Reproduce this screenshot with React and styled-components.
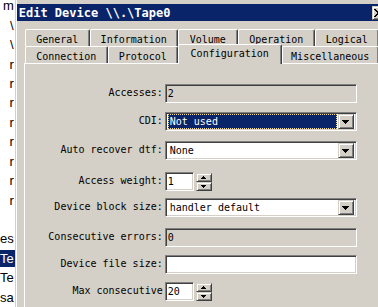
import React from 'react';
import styled, { createGlobalStyle } from 'styled-components';

// Page

const GlobalStyle = createGlobalStyle`
  html, body {
    margin: 0;
    padding: 0;
    background: #ffffff;
    overflow: hidden;
  }
`

const Screen = styled.div`
  display: flex;
  width: 378px;
  height: 307px;
  overflow: hidden;
  background: #ffffff;
`

// Window behind the dialog

const BackList = styled.div`
  flex: 0 0 11px;
  display: flex;
  flex-direction: column;
  margin-top: -4px;
  font-family: "Liberation Sans", Arial, sans-serif;
  font-size: 13px;
  color: #000000;
`

const BackItem = styled.div`
  height: ${p => (p.$selected ? 18 : 20)}px;
  margin: ${p => (p.$selected ? '1px 0' : '0')};
  display: flex;
  align-items: center;
  justify-content: flex-end;
  overflow: hidden;
  white-space: nowrap;
  padding-right: 1px;
  background: ${p => (p.$selected ? '#0a246a' : 'transparent')};
  color: ${p => (p.$selected ? '#ffffff' : '#000000')};
`

// Dialog frame

const Dialog = styled.div`
  box-sizing: border-box;
  flex: 0 0 377px;
  display: flex;
  flex-direction: column;
  background: #d4d0c8;
  border-left: 1px solid #d4d0c8;
  box-shadow: inset 1px 0 #ffffff;
  padding: 4px 2px 0 1px;
`

const TitleBar = styled.div`
  height: 17px;
  display: flex;
  align-items: center;
  justify-content: space-between;
  background: #0a246a;
`

const TitleText = styled.span`
  padding-left: 2px;
  color: #ffffff;
  font-family: "DejaVu Sans Mono", "Liberation Mono", monospace;
  font-weight: bold;
  font-size: 12px;
  white-space: nowrap;
`

const CloseButton = styled.div`
  box-sizing: border-box;
  width: 16px;
  height: 14px;
  margin-right: 2px;
  display: flex;
  align-items: center;
  padding-left: 1px;
  background: #d4d0c8;
  border: 1px solid;
  border-color: #d4d0c8 #404040 #404040 #d4d0c8;
  box-shadow: inset 1px 1px #ffffff, inset -1px -1px #808080;
`

const Body = styled.div`
  display: flex;
  flex-direction: column;
  flex: 1;
  padding: 8px 0 0 7px;
  font-family: "DejaVu Sans Mono", "Liberation Mono", monospace;
  font-size: 10px;
  color: #000000;
`

// Tabs

const TabRow = styled.div`
  display: flex;
  height: 17px;
  padding-left: 1px;
`

const Tab = styled.div`
  box-sizing: border-box;
  position: relative;
  z-index: ${p => (p.$active ? 2 : 1)};
  width: ${p => p.$w}px;
  height: ${p => (p.$active ? 20 : 17)}px;
  margin-top: ${p => (p.$active ? -2 : 0)}px;
  display: flex;
  justify-content: center;
  padding-top: ${p => (p.$active ? 3 : 4)}px;
  line-height: 12px;
  white-space: nowrap;
  background: #d4d0c8;
  border-top: 1px solid #ffffff;
  border-left: 1px solid #ffffff;
  border-right: 1px solid #404040;
  border-radius: 2px 2px 0 0;
  box-shadow: inset -1px 0 #808080;
`

const Panel = styled.div`
  box-sizing: border-box;
  position: relative;
  z-index: 0;
  width: 358px;
  flex: 1;
  display: flex;
  flex-direction: column;
  padding-top: 20px;
  border-top: 1px solid #ffffff;
  border-left: 1px solid #ffffff;
  border-right: 1px solid #404040;
  box-shadow: inset -1px 0 #808080;
`

// Form

const FormRow = styled.div`
  display: flex;
  align-items: center;
  height: 19px;
  margin-top: ${p => p.$gap}px;
`

const Label = styled.div`
  width: 138px;
  flex: 0 0 138px;
  text-align: right;
  white-space: nowrap;
  padding-bottom: 3px;
`

const Sunken = styled.div`
  box-sizing: border-box;
  width: ${p => p.$w}px;
  height: 19px;
  margin-left: 2px;
  display: flex;
  align-items: center;
  background: ${p => (p.$disabled ? '#d4d0c8' : '#ffffff')};
  border: 1px solid;
  border-color: #808080 #ffffff #ffffff #808080;
  box-shadow: inset 1px 1px #404040, inset -1px -1px #d4d0c8;
  padding: 2px;
`

const FieldText = styled.span`
  flex: 1;
  padding-left: ${p => (p.$combo ? 2 : 0)}px;
  white-space: nowrap;
  line-height: 13px;
`

const Selection = styled.div`
  box-sizing: border-box;
  flex: 1;
  height: 15px;
  margin-right: 1px;
  display: flex;
  align-items: center;
  padding-left: 1px;
  background: #0a246a;
  color: #ffffff;
  border: 1px dotted #f2dc9c;
  white-space: nowrap;
`

const RaisedButton = styled.div`
  box-sizing: border-box;
  width: 16px;
  height: ${p => p.$h}px;
  display: flex;
  align-items: center;
  justify-content: center;
  background: #d4d0c8;
  border: 1px solid;
  border-color: #d4d0c8 #404040 #404040 #d4d0c8;
  box-shadow: inset 1px 1px #ffffff, inset -1px -1px #808080;
`

const SpinBox = styled.div`
  display: flex;
  flex-direction: column;
  margin-left: 2px;
`

const DownArrow = () => (
  <svg width="7" height="4" viewBox="0 0 7 4" shapeRendering="crispEdges">
    <path d="M0 0h7v1H0z M1 1h5v1H1z M2 2h3v1H2z M3 3h1v1H3z" fill="#000" />
  </svg>
)

const SmallArrow = ({ up }) => (
  <svg width="5" height="3" viewBox="0 0 5 3" shapeRendering="crispEdges">
    {up
      ? <path d="M0 2h5v1H0z M1 1h3v1H1z M2 0h1v1H2z" fill="#000" />
      : <path d="M0 0h5v1H0z M1 1h3v1H1z M2 2h1v1H2z" fill="#000" />}
  </svg>
)

const CloseGlyph = () => (
  <svg width="8" height="8" viewBox="0 0 8 8" shapeRendering="crispEdges">
    <path
      d="M0 0h2v1h1v1h2V1h1V0h2v1H7v1H6v1H5v2h1v1h1v1h1v1H6V7H5V6H3v1H2v1H0V7h1V6h1V5h1V3H2V2H1V1H0z"
      fill="#000"
    />
  </svg>
)

const backRows = [
  { t: 'm' }, { t: '\\' }, { t: '\\' },
  { t: 'r' }, { t: 'r' }, { t: 'r' }, { t: 'r' },
  { t: 'r' }, { t: 'r' }, { t: 'r' }, { t: 'r' },
  { t: '' }, { t: 'es' }, { t: 'Te', sel: true }, { t: 'Te' }, { t: 'sa' }
]

const tabsBack = [
  { label: 'General', w: 65 },
  { label: 'Information', w: 88 },
  { label: 'Volume', w: 60 },
  { label: 'Operation', w: 77 },
  { label: 'Logical', w: 64 }
]

const tabsFront = [
  { label: 'Connection', w: 83 },
  { label: 'Protocol', w: 70 },
  { label: 'Configuration', w: 104, active: true },
  { label: 'Miscellaneous', w: 97 }
]

function Combo({ value, selected }) {
  return (
    <Sunken $w={192}>
      {selected
        ? <Selection>{value}</Selection>
        : <FieldText $combo>{value}</FieldText>}
      <RaisedButton $h={15}><DownArrow /></RaisedButton>
    </Sunken>
  )
}

function Spin({ value }) {
  return (
    <>
      <Sunken $w={29}><FieldText>{value}</FieldText></Sunken>
      <SpinBox>
        <RaisedButton $h={9}><SmallArrow up /></RaisedButton>
        <RaisedButton $h={9}><SmallArrow /></RaisedButton>
      </SpinBox>
    </>
  )
}

export default function App() {
  return (
    <Screen>
      <GlobalStyle />
      <BackList>
        {backRows.map((r, i) => (
          <BackItem key={i} $selected={r.sel}>{r.t}</BackItem>
        ))}
      </BackList>

      <Dialog>
        <TitleBar>
          <TitleText>{'Edit Device \\\\.\\Tape0'}</TitleText>
          <CloseButton><CloseGlyph /></CloseButton>
        </TitleBar>

        <Body>
          <TabRow>
            {tabsBack.map(t => <Tab key={t.label} $w={t.w}>{t.label}</Tab>)}
          </TabRow>
          <TabRow>
            {tabsFront.map(t => (
              <Tab key={t.label} $w={t.w} $active={t.active}>{t.label}</Tab>
            ))}
          </TabRow>

          <Panel>
            <FormRow $gap={0}>
              <Label>Accesses:</Label>
              <Sunken $w={192} $disabled><FieldText>2</FieldText></Sunken>
            </FormRow>
            <FormRow $gap={9}>
              <Label>CDI:</Label>
              <Combo value="Not used" selected />
            </FormRow>
            <FormRow $gap={10}>
              <Label>Auto recover dtf:</Label>
              <Combo value="None" />
            </FormRow>
            <FormRow $gap={12}>
              <Label>Access weight:</Label>
              <Spin value="1" />
            </FormRow>
            <FormRow $gap={7}>
              <Label>Device block size:</Label>
              <Combo value="handler default" />
            </FormRow>
            <FormRow $gap={11}>
              <Label>Consecutive errors:</Label>
              <Sunken $w={192} $disabled><FieldText>0</FieldText></Sunken>
            </FormRow>
            <FormRow $gap={8}>
              <Label>Device file size:</Label>
              <Sunken $w={192}><FieldText /></Sunken>
            </FormRow>
            <FormRow $gap={8}>
              <Label>Max consecutive</Label>
              <Spin value="20" />
            </FormRow>
          </Panel>
        </Body>
      </Dialog>
    </Screen>
  )
}
